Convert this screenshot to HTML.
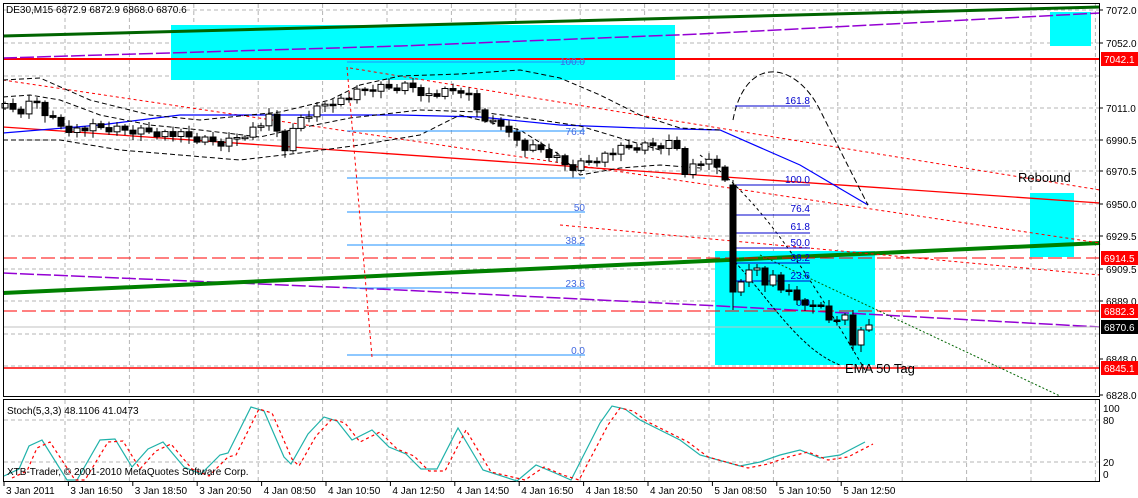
<!DOCTYPE html>
<html><head><meta charset="utf-8"><style>
html,body{margin:0;padding:0;background:#fff;}
svg{display:block;font-family:"Liberation Sans",sans-serif;}
</style></head><body>
<svg id="s" width="1138" height="498" viewBox="0 0 1138 498" xmlns="http://www.w3.org/2000/svg">
<rect width="1138" height="498" fill="#fff"/>
<g id="grid" stroke="#b4b4b4" stroke-dasharray="4,3" stroke-width="1"></g>
<rect x="171" y="25" width="504" height="55" fill="#00FFFF"/>
<rect x="715" y="251" width="160" height="114" fill="#00FFFF"/>
<rect x="1030" y="193" width="44" height="64" fill="#00FFFF"/>
<rect x="1050" y="12" width="41" height="34" fill="#00FFFF"/>
<line x1="3" y1="36" x2="1100" y2="7" stroke="#006400" stroke-width="3"/>
<line x1="3" y1="59" x2="1100" y2="59" stroke="#FF0000" stroke-width="2"/>
<polyline points="3,58 400,46 700,34 1100,13" fill="none" stroke="#9400D3" stroke-width="1.5" stroke-dasharray="14,3"/>
<polyline points="3,273 400,290 720,306 1100,327" fill="none" stroke="#9400D3" stroke-width="1.5" stroke-dasharray="14,3"/>
<line x1="3" y1="293" x2="1100" y2="243" stroke="#008000" stroke-width="4"/>
<line x1="3" y1="258" x2="1100" y2="258" stroke="#FF0000" stroke-width="1" stroke-dasharray="14,5"/>
<line x1="3" y1="311" x2="1100" y2="311" stroke="#FF0000" stroke-width="1" stroke-dasharray="14,5"/>
<line x1="3" y1="368" x2="1100" y2="368" stroke="#FF0000" stroke-width="1.5"/>
<line x1="3" y1="327" x2="1100" y2="327" stroke="#c0c0c0" stroke-width="1"/>
<line x1="3" y1="127" x2="1100" y2="203" stroke="#FF0000" stroke-width="1.3"/>
<line x1="3" y1="80" x2="1100" y2="243" stroke="#FF0000" stroke-width="1" stroke-dasharray="3,3"/>
<line x1="350" y1="68" x2="1100" y2="190" stroke="#FF0000" stroke-width="1" stroke-dasharray="3,3"/>
<line x1="560" y1="225" x2="1100" y2="275" stroke="#FF0000" stroke-width="1" stroke-dasharray="3,3"/>
<polyline points="3,133 100,125 180,115 260,115 400,115 480,117 560,125 640,128 720,130 800,165 868,205" fill="none" stroke="#0000FF" stroke-width="1.2"/>
<polyline points="3,97 30,95 60,100 100,115 150,125 200,130 260,137 300,128 350,118 420,110 480,112 540,120 580,126 620,138 660,150" fill="none" stroke="#000" stroke-width="1" stroke-dasharray="5,3"/>
<polyline points="3,80 40,78 90,100 150,115 200,120 280,112 330,100 360,85 400,76 460,74 520,70 560,78 600,95 640,115 680,128 720,130" fill="none" stroke="#000" stroke-width="1" stroke-dasharray="5,3"/>
<polyline points="3,140 60,140 120,150 180,155 240,160 300,153 360,145 420,135 460,115 520,130 560,155 580,175 620,168 660,165 700,168" fill="none" stroke="#000" stroke-width="1" stroke-dasharray="5,3"/>
<path d="M733,120 C745,55 795,60 820,110 S855,180 868,205" fill="none" stroke="#000" stroke-width="1" stroke-dasharray="6,3"/>
<path d="M700,155 C760,200 800,260 865,370" fill="none" stroke="#000" stroke-width="1" stroke-dasharray="3,3"/>
<path d="M735,262 C770,300 800,350 840,365" fill="none" stroke="#000" stroke-width="1" stroke-dasharray="3,2"/>
<line x1="760" y1="255" x2="1060" y2="396" stroke="#006400" stroke-width="1" stroke-dasharray="2,2"/>
<g stroke="#1E90FF" stroke-width="1">
<line x1="347" y1="62" x2="585" y2="62"/><line x1="347" y1="131" x2="585" y2="131"/>
<line x1="347" y1="178" x2="585" y2="178"/><line x1="347" y1="212" x2="585" y2="212"/>
<line x1="347" y1="245" x2="585" y2="245"/><line x1="347" y1="288" x2="585" y2="288"/>
<line x1="347" y1="355" x2="585" y2="355"/></g>
<line x1="347" y1="67" x2="372" y2="357" stroke="#FF0000" stroke-dasharray="3,3"/>
<g font-size="10" fill="#4169E1" text-anchor="end">
<text x="585" y="65">100.0</text><text x="585" y="135">76.4</text><text x="585" y="211">50</text>
<text x="585" y="244">38.2</text><text x="585" y="287">23.6</text><text x="585" y="354">0.0</text></g>
<g stroke="#0000CD" stroke-width="1">
<line x1="735" y1="106" x2="810" y2="106"/><line x1="735" y1="185" x2="810" y2="185"/>
<line x1="735" y1="215" x2="810" y2="215"/><line x1="735" y1="233" x2="810" y2="233"/>
<line x1="735" y1="248" x2="810" y2="248"/><line x1="735" y1="263" x2="810" y2="263"/>
<line x1="735" y1="281" x2="810" y2="281"/></g>
<g font-size="10" fill="#0000CD" text-anchor="end">
<text x="810" y="104">161.8</text><text x="810" y="183">100.0</text><text x="810" y="212">76.4</text>
<text x="810" y="230">61.8</text><text x="810" y="246">50.0</text><text x="810" y="261">38.2</text>
<text x="810" y="279">23.6</text><text x="810" y="306">0.0</text></g>
<g id="candles"></g>
<text x="1018" y="182" font-size="13" fill="#000">Rebound</text>
<text x="845" y="373" font-size="13" fill="#000">EMA 50 Tag</text>
<text x="6" y="13" font-size="10" fill="#000">DE30,M15  6872.9 6872.9 6868.0 6870.6</text>
<rect x="3.5" y="3.5" width="1096" height="393" fill="none" stroke="#000"/>
<rect x="3.5" y="399.5" width="1096" height="82" fill="none" stroke="#000"/>
<g id="axis" font-size="10" fill="#000"></g>
<polyline id="st1" fill="none" stroke="#20B2AA" stroke-width="1.2"/>
<polyline id="st2" fill="none" stroke="#FF0000" stroke-width="1.2" stroke-dasharray="3,3"/>
<text x="7" y="414" font-size="10">Stoch(5,3,3) 48.1106 41.0473</text>
<text x="7" y="475" font-size="10">XTB-Trader, © 2001-2010 MetaQuotes Software Corp.</text>
</svg>
<script>
(function(){
var NS="http://www.w3.org/2000/svg";
function el(p,t,a,txt){var e=document.createElementNS(NS,t);for(var k in a)e.setAttribute(k,a[k]);if(txt)e.textContent=txt;p.appendChild(e);return e;}
var g=document.getElementById('grid');
var hy=[10,43,76,108,140,171,204,236,269,301,334,366];
hy.forEach(function(y){el(g,'line',{x1:4,y1:y,x2:1099,y2:y});});
for(var x=65;x<1099;x+=64.4){el(g,'line',{x1:x,y1:4,x2:x,y2:396});el(g,'line',{x1:x,y1:400,x2:x,y2:481});}
[420,462].forEach(function(y){el(g,'line',{x1:4,y1:y,x2:1099,y2:y});});
var ax=document.getElementById('axis');
var lab=[["7072.0",10],["7052.0",43],["7011.0",108],["6990.5",140],["6970.5",171],["6950.0",204],["6929.5",236],["6909.5",269],["6889.0",301],["6848.0",359],["6828.0",395]];
lab.forEach(function(l){el(ax,'line',{x1:1100,y1:l[1],x2:1103,y2:l[1],stroke:'#000'});el(ax,'text',{x:1106,y:l[1]+4},l[0]);});
[["7042.1",59,'#f00'],["6914.5",258,'#f00'],["6882.3",311,'#f00'],["6870.6",327,'#000'],["6845.1",368,'#f00']].forEach(function(l){
el(ax,'rect',{x:1101,y:l[1]-7,width:37,height:14,fill:l[2]});el(ax,'text',{x:1104,y:l[1]+4,fill:'#fff'},l[0]);});
[["100",408],["80",420],["20",462],["0",474]].forEach(function(l){el(ax,'text',{x:1103,y:l[1]+4},l[0]);});
var tl=["3 Jan 2011","3 Jan 16:50","3 Jan 18:50","3 Jan 20:50","4 Jan 08:50","4 Jan 10:50","4 Jan 12:50","4 Jan 14:50","4 Jan 16:50","4 Jan 18:50","4 Jan 20:50","5 Jan 08:50","5 Jan 10:50","5 Jan 12:50"];
tl.forEach(function(t,i){var x=3+i*64.4;el(ax,'line',{x1:x+1,y1:482,x2:x+1,y2:486,stroke:'#000'});el(ax,'text',{x:x+3,y:494},t);});
var kp=[[5,108],[20,112],[35,100],[50,118],[60,125],[75,130],[95,128],[120,130],[150,131],[175,135],[200,140],[225,143],[240,135],[255,128],[270,118],[285,148],[300,118],[315,110],[330,100],[345,100],[360,92],[375,88],[390,88],[410,85],[430,96],[450,92],[465,90],[475,108],[490,122],[510,128],[520,148],[540,150],[555,158],[570,168],[590,160],[605,155],[620,150],[640,147],[660,145],[675,142],[685,170],[700,162],[715,165],[725,180],[733,292],[741,282],[749,270],[757,268],[765,285],[773,275],[781,290],[789,290],[797,300],[805,305],[813,305],[821,306],[829,320],[837,320],[845,315],[853,345],[861,330],[869,325]];
function ip(x){for(var i=0;i<kp.length-1;i++){if(x<=kp[i+1][0]){var a=kp[i],b=kp[i+1];return a[1]+(b[1]-a[1])*(x-a[0])/(b[0]-a[0]);}}return kp[kp.length-1][1];}
var cg=document.getElementById('candles');var prev=108;
for(var i=0;;i++){var x=5+i*8;if(x>869)break;if(x>725&&x<733)continue;
var c=ip(x)+(x<725?((i*37)%11-5)*0.9:0);var o=prev;if(x==733)o=185;
var tp=Math.min(o,c),bt=Math.max(o,c);if(bt-tp<1.5){bt=tp+1.5;}
var hi=tp-2-((i*13)%5),lo=bt+2+((i*7)%6);if(x==733)lo=310;
el(cg,'line',{x1:x,y1:hi,x2:x,y2:lo,stroke:'#000'});
el(cg,'rect',{x:x-3,y:tp,width:6,height:bt-tp,fill:c<o?'#fff':'#000',stroke:'#000','stroke-width':1});
prev=c;}
var sp=[[4,476],[19,469],[29,446],[42,440],[67,480],[77,480],[100,440],[115,439],[132,467],[148,449],[163,442],[184,467],[201,474],[220,455],[228,453],[251,407],[264,411],[284,457],[291,464],[308,434],[324,417],[337,421],[352,440],[372,430],[389,447],[406,454],[421,469],[437,469],[458,428],[483,470],[517,481],[536,465],[555,473],[571,480],[600,423],[612,406],[625,409],[640,420],[680,440],[700,455],[740,466],[760,462],[780,455],[800,450],[820,458],[840,455],[865,442]];
document.getElementById('st1').setAttribute('points',sp.map(function(p){return p[0]+','+p[1];}).join(' '));
document.getElementById('st2').setAttribute('points',sp.map(function(p){return (p[0]+8)+','+(Math.min(p[1]+2,480));}).join(' '));
})();
</script>
</body></html>
